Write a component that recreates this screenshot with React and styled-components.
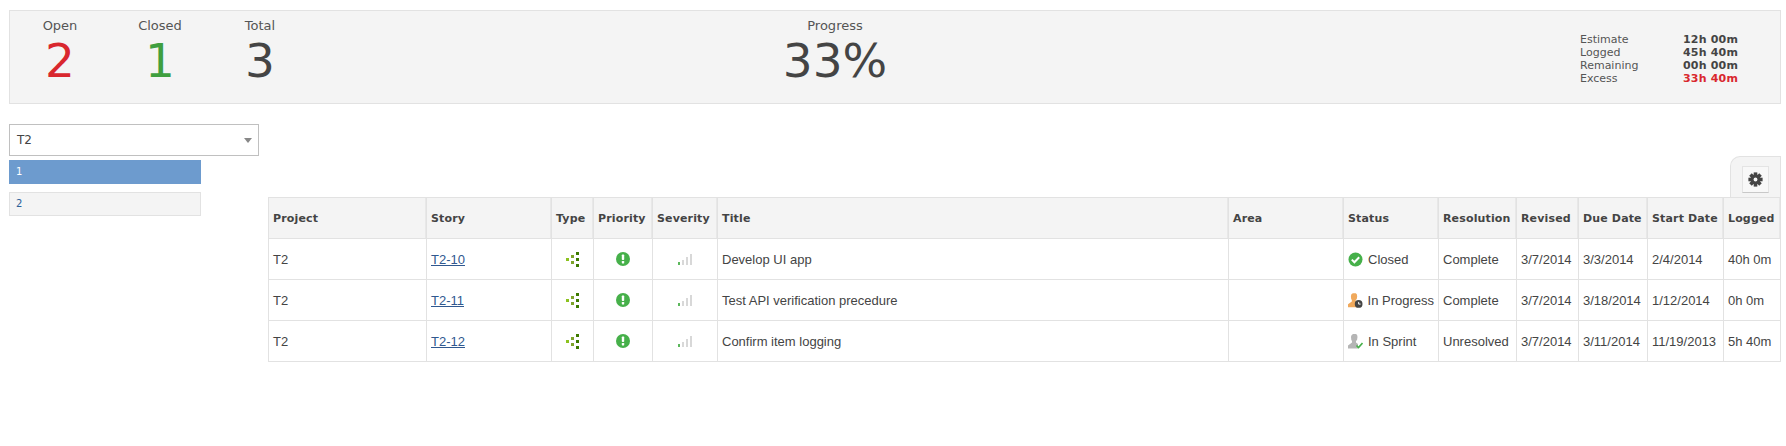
import React from "react";
import styled, { createGlobalStyle } from "styled-components";

const Global = createGlobalStyle`
  html, body { margin: 0; padding: 0; background: #fff; }
  body { font-family: "DejaVu Sans", sans-serif; color: #444; }
`;
const Page = styled.div`
  padding: 10px 5px 0 9px;
`;
const Summary = styled.section`
  display: flex;
  box-sizing: border-box;
  height: 94px;
  background: #f4f4f4;
  border: 1px solid #e2e2e2;
`;
const Stat = styled.div`
  flex: 0 0 100px;
  text-align: center;
  padding-top: 7px;
`;
const StatLabel = styled.div`
  font-size: 13px;
  line-height: 16px;
  color: #555;
`;
const StatValue = styled.div`
  font-size: 47px;
  line-height: 50px;
  margin-top: 2px;
  color: ${(p) => p.$color || "#444"};
`;
const Progress = styled(Stat)`
  flex: 0 0 1050px;
`;
const Times = styled.dl`
  display: grid;
  grid-template-columns: 103px auto;
  grid-auto-rows: 13px;
  margin: 22px 0 0 220px;
  font-size: 11px;
  line-height: 13px;
`;
const TimeLabel = styled.dt`
  color: #555;
`;
const TimeValue = styled.dd`
  margin: 0;
  font-weight: bold;
  letter-spacing: 0.2px;
  color: ${(p) => p.$color || "#444"};
`;
const Content = styled.div`
  display: flex;
  margin-top: 20px;
  gap: 9px;
`;
const Sidebar = styled.aside`
  flex: 0 0 250px;
`;
const Select = styled.div`
  box-sizing: border-box;
  display: flex;
  align-items: center;
  justify-content: space-between;
  height: 32px;
  padding: 0 6px 0 7px;
  border: 1px solid #c0c0c0;
  font: 12px "DejaVu Sans", sans-serif;
  color: #444;
`;
const Caret = styled.span`
  width: 0;
  height: 0;
  border-left: 4px solid transparent;
  border-right: 4px solid transparent;
  border-top: 5px solid #888;
`;
const Item = styled.div`
  box-sizing: border-box;
  width: 192px;
  height: 24px;
  margin-top: ${(p) => (p.$active ? "4px" : "8px")};
  padding-left: 6px;
  font-size: 10px;
  line-height: 22px;
  background: ${(p) => (p.$active ? "#6d9bce" : "#f4f4f4")};
  border: 1px solid ${(p) => (p.$active ? "#6d9bce" : "#e2e2e2")};
  color: ${(p) => (p.$active ? "#fff" : "#2a6099")};
`;
const Main = styled.main`
  flex: 1;
  min-width: 0;
  padding-top: 32px;
`;
const ToolTab = styled.div`
  box-sizing: border-box;
  display: flex;
  justify-content: center;
  width: 51px;
  height: 42px;
  margin: 0 0 -1px auto;
  padding-top: 9px;
  background: #f4f4f4;
  border: 1px solid #e2e2e2;
  border-bottom: 0;
  border-top-left-radius: 10px;
`;
const GearButton = styled.button`
  box-sizing: border-box;
  display: flex;
  align-items: center;
  justify-content: center;
  width: 27px;
  height: 27px;
  padding: 0;
  background: #f8f8f8;
  border: 1px solid #e4e4e4;
  border-bottom-color: #c8c8c8;
`;
const Table = styled.table`
  width: 1512px;
  table-layout: fixed;
  border-collapse: collapse;
  font: 13px "Liberation Sans", sans-serif;
  color: #444;
`;
const Th = styled.th`
  height: 40px;
  padding: 0 4px;
  background: #f4f4f4;
  border: 1px solid #e2e2e2;
  box-shadow: inset -1px 0 0 #e8e8e8;
  font: bold 11px "DejaVu Sans", sans-serif;
  letter-spacing: 0.15px;
  text-align: left;
  white-space: nowrap;
  overflow: hidden;
`;
const Td = styled.td`
  height: 40px;
  padding: 0 4px;
  border: 1px solid #e2e2e2;
  text-align: left;
  white-space: nowrap;
  overflow: hidden;
`;
const IconBox = styled.span`
  display: flex;
  justify-content: center;
  align-items: center;
`;
const StoryLink = styled.a`
  color: #30588f;
  text-decoration: underline;
`;
const StatusCell = styled.span`
  display: flex;
  align-items: center;
  gap: 5px;
`;

const GearIcon = () => (
  <svg width="15" height="15" viewBox="0 0 15 15">
    {[0, 45, 90, 135].map((a) => (
      <rect key={a} x="5.7" y="0.4" width="3.6" height="14.2" fill="#444" transform={`rotate(${a} 7.5 7.5)`} />
    ))}
    <circle cx="7.5" cy="7.5" r="5" fill="#444" />
    <circle cx="7.5" cy="7.5" r="1.9" fill="#f8f8f8" />
  </svg>
);
const TypeIcon = () => (
  <svg width="13" height="15" viewBox="0 0 13 15">
    <rect x="0" y="6" width="3" height="3" fill="#8cc21f" />
    <rect x="5" y="3" width="3" height="3" fill="#7da32a" />
    <rect x="5" y="9" width="3" height="3" fill="#7da32a" />
    <rect x="10" y="0" width="3" height="3" fill="#3d7a00" />
    <rect x="10" y="6" width="3" height="3" fill="#3d7a00" />
    <rect x="10" y="12" width="3" height="3" fill="#3d7a00" />
  </svg>
);
const PriorityIcon = () => (
  <svg width="14" height="14" viewBox="0 0 14 14">
    <circle cx="7" cy="7" r="7" fill="#46b04a" />
    <rect x="5.8" y="2.5" width="2.4" height="5.5" rx="0.8" fill="#fff" />
    <rect x="5.8" y="9" width="2.4" height="2.4" rx="0.6" fill="#fff" />
  </svg>
);
const SeverityIcon = () => (
  <svg width="14" height="11" viewBox="0 0 14 11">
    <rect x="0" y="8" width="2" height="3" fill="#5cb85c" />
    <rect x="4" y="6" width="2" height="5" fill="#d8d8d8" />
    <rect x="8" y="3" width="2" height="8" fill="#d8d8d8" />
    <rect x="12" y="0" width="2" height="11" fill="#d8d8d8" />
  </svg>
);
const ClosedIcon = () => (
  <svg width="15" height="15" viewBox="0 0 15 15">
    <circle cx="7.5" cy="7.5" r="7" fill="#46b04a" />
    <path d="M3.8 7.6 L6.4 10.2 L11.2 5.2" fill="none" stroke="#fff" strokeWidth="2" />
  </svg>
);
const PersonShape = ({ fill }) => (
  <path
    d="M5 0 H8 Q9.5 0.5 9.5 3 Q9.5 6 8 7 V8.5 L10 10 V14.5 H0 V11.5 L4 8.5 V7 Q3 6 3 3 Q3 0.8 5 0 Z"
    fill={fill}
  />
);
const ProgressIcon = () => (
  <svg width="15" height="15" viewBox="0 0 15 15">
    <PersonShape fill="#f0a95c" />
    <circle cx="11" cy="11" r="4" fill="#444" />
    <path d="M11 9 V11.2 H13" fill="none" stroke="#fff" strokeWidth="1" />
  </svg>
);
const SprintIcon = () => (
  <svg width="15" height="15" viewBox="0 0 15 15">
    <PersonShape fill="#b5b5b5" />
    <path d="M8.5 11.5 L10.5 13.5 L14.5 9" fill="none" stroke="#46b04a" strokeWidth="1.6" />
  </svg>
);

const columns = [
  ["Project", 158], ["Story", 125], ["Type", 42], ["Priority", 59], ["Severity", 65],
  ["Title", 511], ["Area", 115], ["Status", 95], ["Resolution", 78], ["Revised", 62],
  ["Due Date", 69], ["Start Date", 76], ["Logged", 57],
];
const rows = [
  { story: "T2-10", title: "Develop UI app", icon: <ClosedIcon />, status: "Closed", res: "Complete", due: "3/3/2014", start: "2/4/2014", logged: "40h 0m" },
  { story: "T2-11", title: "Test API verification precedure", icon: <ProgressIcon />, status: "In Progress", res: "Complete", due: "3/18/2014", start: "1/12/2014", logged: "0h 0m" },
  { story: "T2-12", title: "Confirm item logging", icon: <SprintIcon />, status: "In Sprint", res: "Unresolved", due: "3/11/2014", start: "11/19/2013", logged: "5h 40m" },
];

export default function App() {
  return (
    <Page>
      <Global />
      <Summary>
        <Stat><StatLabel>Open</StatLabel><StatValue $color="#d9272e">2</StatValue></Stat>
        <Stat><StatLabel>Closed</StatLabel><StatValue $color="#3f9f3f">1</StatValue></Stat>
        <Stat><StatLabel>Total</StatLabel><StatValue>3</StatValue></Stat>
        <Progress><StatLabel>Progress</StatLabel><StatValue>33%</StatValue></Progress>
        <Times>
          <TimeLabel>Estimate</TimeLabel><TimeValue>12h 00m</TimeValue>
          <TimeLabel>Logged</TimeLabel><TimeValue>45h 40m</TimeValue>
          <TimeLabel>Remaining</TimeLabel><TimeValue>00h 00m</TimeValue>
          <TimeLabel>Excess</TimeLabel><TimeValue $color="#d9272e">33h 40m</TimeValue>
        </Times>
      </Summary>
      <Content>
        <Sidebar>
          <Select>T2<Caret /></Select>
          <Item $active>1</Item>
          <Item>2</Item>
        </Sidebar>
        <Main>
          <ToolTab><GearButton><GearIcon /></GearButton></ToolTab>
          <Table>
            <colgroup>
              {columns.map(([name, w]) => <col key={name} width={w} />)}
            </colgroup>
            <thead>
              <tr>{columns.map(([name]) => <Th key={name}>{name}</Th>)}</tr>
            </thead>
            <tbody>
              {rows.map((r) => (
                <tr key={r.story}>
                  <Td>T2</Td>
                  <Td><StoryLink href="#">{r.story}</StoryLink></Td>
                  <Td><IconBox><TypeIcon /></IconBox></Td>
                  <Td><IconBox><PriorityIcon /></IconBox></Td>
                  <Td><IconBox><SeverityIcon /></IconBox></Td>
                  <Td>{r.title}</Td>
                  <Td />
                  <Td><StatusCell>{r.icon}{r.status}</StatusCell></Td>
                  <Td>{r.res}</Td>
                  <Td>3/7/2014</Td>
                  <Td>{r.due}</Td>
                  <Td>{r.start}</Td>
                  <Td>{r.logged}</Td>
                </tr>
              ))}
            </tbody>
          </Table>
        </Main>
      </Content>
    </Page>
  );
}
